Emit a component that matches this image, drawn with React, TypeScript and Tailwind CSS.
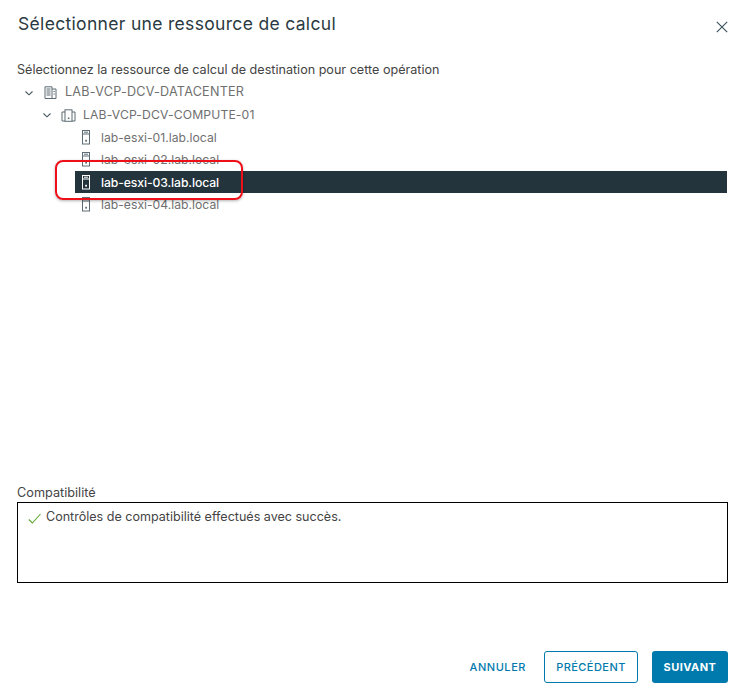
const F = "[font-family:Inter,'Noto_Sans',sans-serif]";

function Chevron() {
  return (
    <svg width="10" height="10" viewBox="0 0 10 10" fill="none" stroke="#44565f" strokeWidth="1.1">
      <path d="M1.5 3.5 L5 6.8 L8.5 3.5" />
    </svg>
  );
}

function Host({ light }: { light?: boolean }) {
  const c = light ? "#ffffff" : "#5d6d75";
  return (
    <svg width="10" height="15" viewBox="0 0 10 15" fill="none" stroke={c} strokeWidth="1">
      <rect x="1.5" y="0.5" width="7" height="13.5" />
      <path d="M1.5 4 H8.5 M3 2.2 H7" />
      <rect x="4.2" y="9.8" width="1.8" height="1.8" fill={c} stroke="none" />
    </svg>
  );
}

function Datacenter() {
  return (
    <svg width="13" height="13" viewBox="0 0 13 13" fill="none" stroke="#5d6d75" strokeWidth="1">
      <path d="M1 12.5 V0.8 H8 V12.5 Z M8 3 H12 V12.5 H8" />
      <path d="M2.5 3 H6.5 M2.5 5 H6.5 M2.5 7 H6.5 M2.5 9 H6.5 M9.5 5.5 H10.8 M9.5 8 H10.8" />
    </svg>
  );
}

function Cluster() {
  return (
    <svg width="15" height="13" viewBox="0 0 15 13" fill="none" stroke="#5d6d75" strokeWidth="1">
      <rect x="4" y="0.8" width="7" height="11.5" />
      <path d="M4 3 H1 V12 H4 M11 3 H14 V12 H11" />
      <rect x="6.8" y="8.5" width="1.6" height="1.6" fill="#5d6d75" stroke="none" />
    </svg>
  );
}

function HostRow({ name, selected }: { name: string; selected?: boolean }) {
  return (
    <div
      className={`flex h-[22.4px] items-center pl-[6px] ${selected ? "bg-[#23343c] font-medium tracking-[-0.1px] text-white" : "text-[#6f6f6f]"}`}
    >
      <Host light={selected} />
      <span className="ml-[10px] pt-[1px]">{name}</span>
    </div>
  );
}

export default function App() {
  return (
    <div className={`relative flex h-[696px] w-[744px] flex-col overflow-hidden bg-white ${F}`}>
      <header className="flex items-start justify-between pl-[18px] pr-[16px] pt-[12px]">
        <h1 className="text-[17.5px] leading-[24px] font-normal tracking-[0.32px] text-[#2b3a42]">
          Sélectionner une ressource de calcul
        </h1>
        <button className="mt-[9px] text-[#3f5561]">
          <svg width="12" height="12" viewBox="0 0 12 12" fill="none" stroke="currentColor" strokeWidth="1.2">
            <path d="M0.8 0.8 L11.2 11.2 M11.2 0.8 L0.8 11.2" />
          </svg>
        </button>
      </header>

      <p className="mt-[23px] pl-[17px] text-[12.6px] leading-[22px] text-[#444444]">
        Sélectionnez la ressource de calcul de destination pour cette opération
      </p>

      <div className="mr-[17px] mt-[0.5px] text-[12.2px]">
        <div className="flex h-[22.4px] items-center pl-[24px] text-[#6f6f6f]">
          <Chevron />
          <span className="ml-[10px]"><Datacenter /></span>
          <span className="ml-[8px] text-[12.6px] tracking-[0.25px]">LAB-VCP-DCV-DATACENTER</span>
        </div>
        <div className="flex h-[22.4px] items-center pl-[42px] text-[#6f6f6f]">
          <Chevron />
          <span className="ml-[9px]"><Cluster /></span>
          <span className="ml-[7px] tracking-[0.13px]">LAB-VCP-DCV-COMPUTE-01</span>
        </div>
        <div className="ml-[75px]">
          <HostRow name="lab-esxi-01.lab.local" />
          <HostRow name="lab-esxi-02.lab.local" />
          <HostRow name="lab-esxi-03.lab.local" selected />
          <HostRow name="lab-esxi-04.lab.local" />
        </div>
      </div>

      <div className="mt-[268.5px] pl-[17px] pr-[16px]">
        <div className="text-[12.7px] leading-[18px] text-[#444444]">Compatibilité</div>
        <div className="flex h-[81px] items-start border border-black pl-[10px] pt-[5px] text-[12.55px] leading-[18px] text-[#444444]">
          <svg className="mt-[5px]" width="13" height="11" viewBox="0 0 13 11" fill="none" stroke="#5ca832" strokeWidth="1.1">
            <path d="M0.8 6.5 L4.3 10 L12.5 1" />
          </svg>
          <span className="ml-[5px]">Contrôles de compatibilité effectués avec succès.</span>
        </div>
      </div>

      <footer className="mt-[68px] flex items-center justify-end pr-[16px] text-[11px] tracking-[0.45px]">
        <button className="mr-[18px] font-medium tracking-[0.55px] text-[#0079ad]">ANNULER</button>
        <button className="mr-[14px] h-[32px] w-[94px] rounded-[3px] border border-[#0079ad] font-medium text-[#0079ad]">
          PRÉCÉDENT
        </button>
        <button className="h-[32px] w-[76px] rounded-[3px] bg-[#0079ad] font-bold text-white">SUIVANT</button>
      </footer>

      <div className="absolute top-[160px] left-[55px] h-[40px] w-[188px] rounded-[8px] border-2 border-[#ee0f18] shadow-[0_1px_3px_rgba(0,0,0,0.3)]" />
    </div>
  );
}
